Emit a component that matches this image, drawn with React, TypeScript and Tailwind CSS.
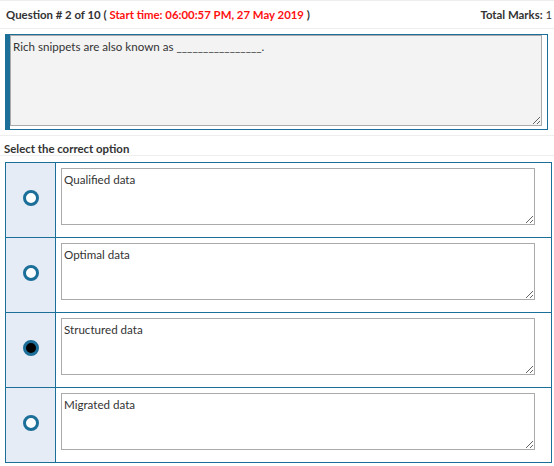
import React from "react";

const options = [
  { id: "a", label: "Qualified data" },
  { id: "b", label: "Optimal data" },
  { id: "c", label: "Structured data" },
  { id: "d", label: "Migrated data" },
];

const selected = "c";

function Radio({ checked }: { checked: boolean }) {
  return (
    <span
      className={
        "block size-4 rounded-full border-[3px] border-[#1c6f99] " +
        (checked ? "bg-black" : "bg-white")
      }
    />
  );
}

export default function App() {
  return (
    <div className="w-[554px] h-[466px] overflow-hidden bg-white text-[#333] font-['Lato','Liberation_Sans',sans-serif]">
      <div className="flex h-[29px] items-center justify-between border-y border-[#eee] pl-[6px] pr-[2px] text-[11.4px] font-bold">
        <p>
          Question # 2 of 10 ({" "}
          <span className="text-[#f11]">Start time: 06:00:57 PM, 27 May 2019</span> )
        </p>
        <p>
          Total Marks: <span className="font-normal">1</span>
        </p>
      </div>

      <div className="h-[107px] border-b border-[#eee] pt-[5px] pl-[5px]">
        <div className="w-[543px] border border-l-[5px] border-[#1c6f99] pr-[5px] pb-[3px]">
          <textarea
            readOnly
            value="Rich snippets are also known as ________________."
            className="block h-[91px] w-[532px] border border-[#aaa] bg-[#f3f3f3] px-[2px] py-[4px] text-[11.6px] leading-[14px] text-[#333] outline-none"
          />
        </div>
      </div>

      <div className="h-[20px] border-b border-[#eee] pt-[6px] pl-[4px] text-[11.4px] leading-[13px] font-bold">
        Select the correct option
      </div>

      <div className="ml-[5px] mt-[6px] w-[547px] border border-b-0 border-[#1c6f99]">
        {options.map((o) => (
          <div key={o.id} className="flex h-[75px] border-b border-[#1c6f99]">
            <div className="flex w-[50px] items-center justify-center border-r border-[#1c6f99] bg-[#e5ecf6] pb-[4px]">
              <Radio checked={o.id === selected} />
            </div>
            <div className="pl-[5px] pt-[5px]">
              <textarea
                readOnly
                value={o.label}
                className="block h-[57px] w-[474px] border border-[#aaa] bg-white px-[2px] py-[4px] text-[11.6px] leading-[14px] text-[#333] outline-none"
              />
            </div>
          </div>
        ))}
      </div>
    </div>
  );
}
